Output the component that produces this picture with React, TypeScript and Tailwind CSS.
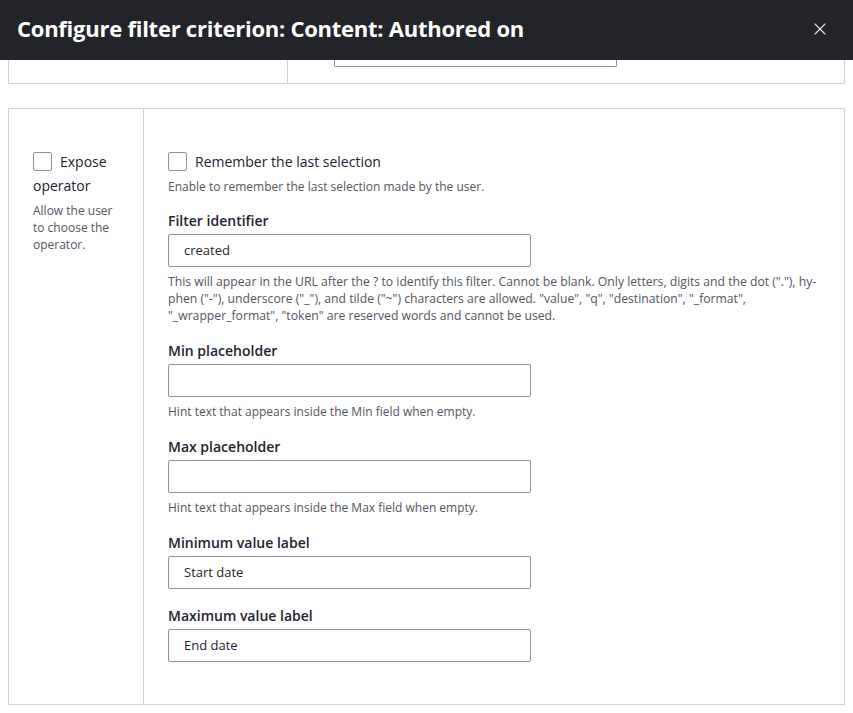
import { X } from 'lucide-react';

const font = { fontFamily: '"Open Sans", "Noto Sans", sans-serif' };

interface FieldProps {
  label: string;
  value?: string;
  hint?: React.ReactNode;
}

const TextField = ({ label, value, hint }: FieldProps) => (
  <div className="mb-[18px]">
    <label className="block text-[14px] leading-[18px] font-semibold text-[#222330] mb-[4px]">{label}</label>
    <div className="w-[363px] h-[33px] rounded-[2px] border border-[#8e929c] bg-white flex items-center px-[15px] text-[13px] text-[#222330]">
      {value}
    </div>
    {hint && <div className="mt-[6px] text-[12px] leading-[17px] text-[#545560]">{hint}</div>}
  </div>
);

const Checkbox = () => (
  <span className="inline-block w-[19px] h-[19px] rounded-[2px] border border-[#8e929c] bg-white shrink-0" />
);

export default function App() {
  return (
    <div className="w-[853px] h-[713px] bg-white overflow-hidden" style={font}>
      {/* Header */}
      <div className="h-[60px] bg-[#232429] flex items-center justify-between pl-[17px] pr-[23px] pb-[4px]">
        <h1 className="text-[22px] font-bold tracking-[-0.25px] text-white leading-none">
          Configure filter criterion: Content: Authored on
        </h1>
        <X className="w-[20px] h-[20px] text-[#e6e6e9] mt-[2px]" strokeWidth={1.3} />
      </div>

      <div className="px-[8px]">
        {/* previous fieldset, scrolled off */}
        <div className="h-[24px] border-x border-b border-[#d3d4d9] flex">
          <div className="w-[279px] border-r border-[#d3d4d9]" />
          <div className="pl-[46px]">
            <div className="w-[283px] h-[7px] border-x border-b border-[#8e929c] rounded-b-[2px]" />
          </div>
        </div>

        {/* Exposed options */}
        <div className="mt-[24px] h-[597px] border border-[#d3d4d9] flex">
          <div className="w-[135px] border-r border-[#d3d4d9] pl-[24px] pt-[42px] pr-[16px]">
            <div className="flex items-center gap-[8px] text-[14px] text-[#222330]">
              <Checkbox />
              <span>Expose</span>
            </div>
            <div className="text-[14px] text-[#222330] mt-[3px]">operator</div>
            <div className="mt-[6px] text-[12px] leading-[17px] text-[#545560]">
              Allow the user to choose the operator.
            </div>
          </div>

          <div className="flex-1 pl-[24px] pt-[42px]">
            <div className="flex items-center gap-[8px] text-[14px] text-[#222330]">
              <Checkbox />
              <span>Remember the last selection</span>
            </div>
            <div className="mt-[6px] text-[12px] leading-[17px] text-[#545560] mb-[17px]">
              Enable to remember the last selection made by the user.
            </div>

            <TextField
              label="Filter identifier"
              value="created"
              hint={
                <div className="whitespace-nowrap text-[12.2px]">
                  This will appear in the URL after the ? to identify this filter. Cannot be blank. Only letters, digits and the dot ("."), hy-
                  <br />
                  phen ("-"), underscore ("_"), and tilde ("~") characters are allowed. "value", "q", "destination", "_format",
                  <br />
                  "_wrapper_format", "token" are reserved words and cannot be used.
                </div>
              }
            />
            <TextField label="Min placeholder" hint="Hint text that appears inside the Min field when empty." />
            <TextField label="Max placeholder" hint="Hint text that appears inside the Max field when empty." />
            <TextField label="Minimum value label" value="Start date" />
            <TextField label="Maximum value label" value="End date" />
          </div>
        </div>
      </div>
    </div>
  );
}
